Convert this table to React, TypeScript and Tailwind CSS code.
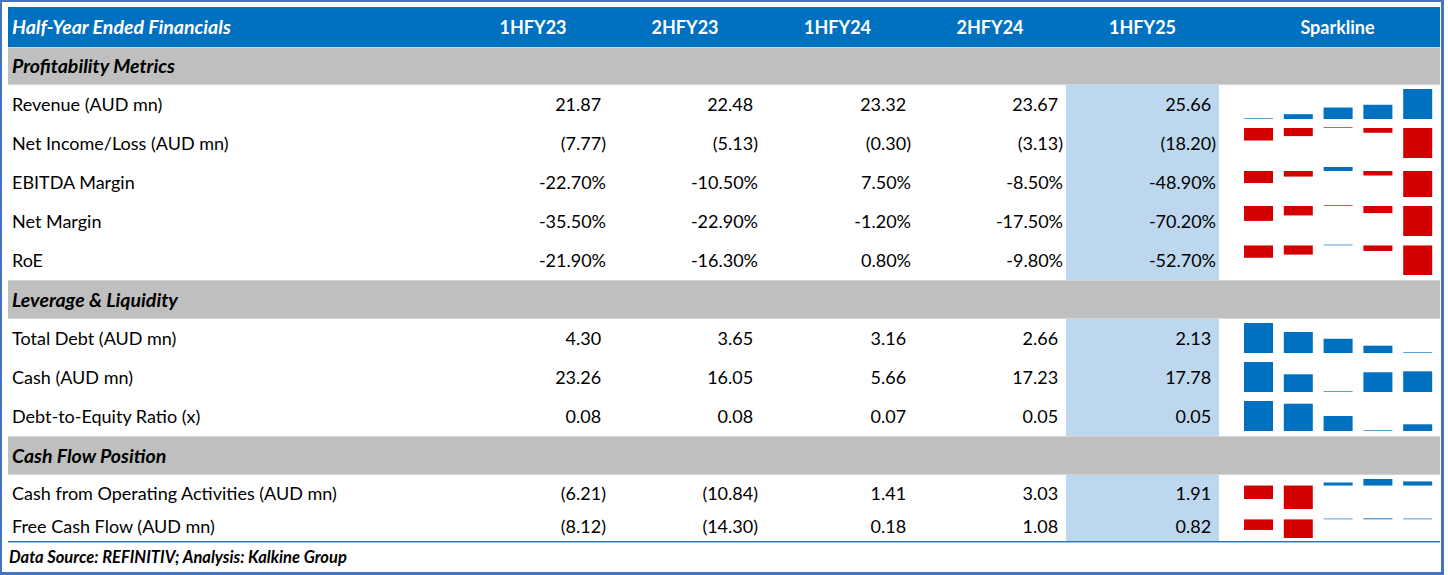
type Row =
  | { kind: "section"; label: string; h: number }
  | {
      kind: "data";
      label: string;
      vals: string[];
      spark: number[];
      h: number;
      top: number;
      chart: number;
    };

const rows: Row[] = [
  { kind: "section", label: "Profitability Metrics", h: 38 },
  {
    kind: "data",
    label: "Revenue (AUD mn)",
    vals: ["21.87", "22.48", "23.32", "23.67", "25.66"],
    spark: [21.87, 22.48, 23.32, 23.67, 25.66],
    h: 39,
    top: 4,
    chart: 30,
  },
  {
    kind: "data",
    label: "Net Income/Loss (AUD mn)",
    vals: ["(7.77)", "(5.13)", "(0.30)", "(3.13)", "(18.20)"],
    spark: [-7.77, -5.13, -0.3, -3.13, -18.2],
    h: 39,
    top: 4,
    chart: 30,
  },
  {
    kind: "data",
    label: "EBITDA Margin",
    vals: ["-22.70%", "-10.50%", "7.50%", "-8.50%", "-48.90%"],
    spark: [-22.7, -10.5, 7.5, -8.5, -48.9],
    h: 39,
    top: 4,
    chart: 30,
  },
  {
    kind: "data",
    label: "Net Margin",
    vals: ["-35.50%", "-22.90%", "-1.20%", "-17.50%", "-70.20%"],
    spark: [-35.5, -22.9, -1.2, -17.5, -70.2],
    h: 39,
    top: 4,
    chart: 30,
  },
  {
    kind: "data",
    label: "RoE",
    vals: ["-21.90%", "-16.30%", "0.80%", "-9.80%", "-52.70%"],
    spark: [-21.9, -16.3, 0.8, -9.8, -52.7],
    h: 39,
    top: 4,
    chart: 30,
  },
  { kind: "section", label: "Leverage & Liquidity", h: 39 },
  {
    kind: "data",
    label: "Total Debt (AUD mn)",
    vals: ["4.30", "3.65", "3.16", "2.66", "2.13"],
    spark: [4.3, 3.65, 3.16, 2.66, 2.13],
    h: 39,
    top: 4,
    chart: 30,
  },
  {
    kind: "data",
    label: "Cash (AUD mn)",
    vals: ["23.26", "16.05", "5.66", "17.23", "17.78"],
    spark: [23.26, 16.05, 5.66, 17.23, 17.78],
    h: 39,
    top: 4,
    chart: 30,
  },
  {
    kind: "data",
    label: "Debt-to-Equity Ratio (x)",
    vals: ["0.08", "0.08", "0.07", "0.05", "0.05"],
    spark: [0.08, 0.0773, 0.065, 0.05, 0.0567],
    h: 39,
    top: 4,
    chart: 30,
  },
  { kind: "section", label: "Cash Flow Position", h: 39 },
  {
    kind: "data",
    label: "Cash from Operating Activities (AUD mn)",
    vals: ["(6.21)", "(10.84)", "1.41", "3.03", "1.91"],
    spark: [-6.21, -10.84, 1.41, 3.03, 1.91],
    h: 37,
    top: 4,
    chart: 30,
  },
  {
    kind: "data",
    label: "Free Cash Flow (AUD mn)",
    vals: ["(8.12)", "(14.30)", "0.18", "1.08", "0.82"],
    spark: [-8.12, -14.3, 0.18, 1.08, 0.82],
    h: 29,
    top: 6,
    chart: 20,
  },
];

const periods = ["1HFY23", "2HFY23", "1HFY24", "2HFY24", "1HFY25"];
const cols = "grid grid-cols-[449px_152px_152px_153px_152px_153px_221px]";

function Sparkline({ values, h, top, chart }: { values: number[]; h: number; top: number; chart: number }) {
  const lo = Math.min(...values);
  const hi = Math.max(...values);
  const base = lo >= 0 ? lo : hi <= 0 ? hi : 0;
  const scale = chart / (hi - lo);
  const axis = top + (hi - base) * scale;
  return (
    <svg width={221} height={h} className="block">
      {values.map((v, i) => {
        let bh = Math.abs(v - base) * scale;
        const thin = bh < 1.5;
        if (bh < 1) bh = 1;
        const y = v >= base ? axis - bh : axis;
        return (
          <rect
            key={i}
            x={25 + i * 39.8}
            y={y}
            width={29}
            height={bh}
            fill={v >= 0 ? "#0070c0" : "#d40000"}
            opacity={thin ? 0.65 : 1}
          />
        );
      })}
    </svg>
  );
}

function Num({ v }: { v: string }) {
  const plain = !v.startsWith("(") && !v.endsWith("%");
  return (
    <span>
      {v}
      {plain && <span className="invisible">)</span>}
    </span>
  );
}

export default function App() {
  return (
    <div className="w-[1444px] h-[575px] bg-white border-2 border-b-[3px] border-r-[3px] border-[#4472c4] pt-[5px] pl-[6px] pr-[1px] font-['Lato','Liberation_Sans',sans-serif] text-[18px] text-black">
      {/* Header */}
      <div className={`${cols} h-[40px] bg-[#0070c0] text-white font-bold items-center`}>
        <div className="pl-[4px] italic text-[19.5px]">Half-Year Ended Financials</div>
        {periods.map((p) => (
          <div key={p} className="text-center">
            {p}
          </div>
        ))}
        <div className="text-center pl-4">Sparkline</div>
      </div>

      {rows.map((r, idx) =>
        r.kind === "section" ? (
          <div
            key={idx}
            style={{ height: r.h }}
            className="flex items-center bg-[#bfbfbf] border-t border-b border-[#d4d4d4] pl-[4px] font-bold italic text-[19.5px]"
          >
            {r.label}
          </div>
        ) : (
          <div key={idx} style={{ height: r.h }} className={`${cols} items-stretch`}>
            <div className="flex items-center pl-[4px]">{r.label}</div>
            {r.vals.map((v, i) => (
              <div
                key={i}
                className={`flex items-center justify-end pr-[3px] ${i === 4 ? "bg-[#bdd7ee]" : ""}`}
              >
                <Num v={v} />
              </div>
            ))}
            <div>
              <Sparkline values={r.spark} h={r.h} top={r.top} chart={r.chart} />
            </div>
          </div>
        )
      )}

      <div className="h-[2px] bg-[#2e75b6] border-b border-[#9dc3e6]" />
      <div className="h-[29px] flex items-center pl-[1px] text-[16.5px] font-bold italic">
        Data Source: REFINITIV; Analysis: Kalkine Group
      </div>
    </div>
  );
}
